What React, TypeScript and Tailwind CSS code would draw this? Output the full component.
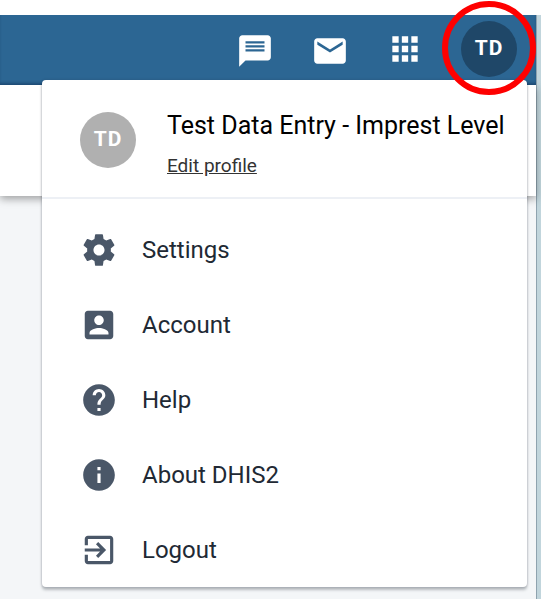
import React from "react";

const items = [
  {
    label: "Settings",
    path: "M19.43 12.98c.04-.32.07-.64.07-.98s-.03-.66-.07-.98l2.11-1.65c.19-.15.24-.42.12-.64l-2-3.46c-.12-.22-.39-.3-.61-.22l-2.49 1c-.52-.4-1.08-.73-1.69-.98l-.38-2.65C14.46 2.18 14.25 2 14 2h-4c-.25 0-.46.18-.49.42l-.38 2.65c-.61.25-1.17.59-1.69.98l-2.49-1c-.23-.09-.49 0-.61.22l-2 3.46c-.13.22-.07.49.12.64l2.11 1.65c-.04.32-.07.65-.07.98s.03.66.07.98l-2.11 1.65c-.19.15-.24.42-.12.64l2 3.46c.12.22.39.3.61.22l2.49-1c.52.4 1.08.73 1.69.98l.38 2.65c.03.24.24.42.49.42h4c.25 0 .46-.18.49-.42l.38-2.65c.61-.25 1.17-.59 1.69-.98l2.49 1c.23.09.49 0 .61-.22l2-3.46c.12-.22.07-.49-.12-.64l-2.11-1.65zM12 15.5c-1.93 0-3.5-1.57-3.5-3.5s1.57-3.5 3.5-3.5 3.5 1.57 3.5 3.5-1.57 3.5-3.5 3.5z",
  },
  {
    label: "Account",
    path: "M3 5v14c0 1.1.89 2 2 2h14c1.1 0 2-.9 2-2V5c0-1.1-.9-2-2-2H5c-1.11 0-2 .9-2 2zm12 4c0 1.66-1.34 3-3 3s-3-1.34-3-3 1.34-3 3-3 3 1.34 3 3zm-9 8c0-2 4-3.1 6-3.1s6 1.1 6 3.1v1H6v-1z",
  },
  {
    label: "Help",
    path: "M12 2C6.48 2 2 6.48 2 12s4.48 10 10 10 10-4.48 10-10S17.52 2 12 2zm1 17h-2v-2h2v2zm2.07-7.75l-.9.92C13.45 12.9 13 13.5 13 15h-2v-.5c0-1.1.45-2.1 1.17-2.83l1.24-1.26c.37-.36.59-.86.59-1.41 0-1.1-.9-2-2-2s-2 .9-2 2H8c0-2.21 1.79-4 4-4s4 1.79 4 4c0 .88-.36 1.68-.93 2.25z",
  },
  {
    label: "About DHIS2",
    path: "M12 2C6.48 2 2 6.48 2 12s4.48 10 10 10 10-4.48 10-10S17.52 2 12 2zm1 15h-2v-6h2v6zm0-8h-2V7h2v2z",
  },
  {
    label: "Logout",
    path: "M10.09 15.59L11.5 17l5-5-5-5-1.41 1.41L12.67 11H3v2h9.67l-2.58 2.59zM19 3H5c-1.11 0-2 .9-2 2v4h2V5h14v14H5v-4H3v4c0 1.1.89 2 2 2h14c1.1 0 2-.9 2-2V5c0-1.1-.9-2-2-2z",
  },
];

function Icon({ path }: { path: string }) {
  return (
    <svg viewBox="0 0 24 24" className="block size-[38px] shrink-0 fill-current" aria-hidden="true">
      <path d={path} />
    </svg>
  );
}

function ProfileMenu() {
  return (
    <div className="absolute top-[65px] right-[9px] left-[42px] rounded-[4px] bg-white shadow-[0_0_2px_1px_rgba(33,43,54,0.12),0_3px_3px_rgba(33,43,54,0.28)]">
      <div className="flex items-start gap-[31px] border-b-2 border-[#edf0f5] pt-6 pr-4 pb-[13px] pl-[38px]">
        <div className="flex pt-2">
          <span className="flex size-14 shrink-0 items-center justify-center rounded-full bg-[#b0b0b0] text-[21px] font-bold tracking-[1px] text-white">
            TD
          </span>
        </div>
        <div className="flex flex-col items-start whitespace-nowrap">
          <h1 className="text-[25px] leading-[44px] text-black">Test Data Entry - Imprest Level</h1>
          <a href="#profile" className="text-[19px] leading-[36px] text-[#333] underline">
            Edit profile
          </a>
        </div>
      </div>
      <ul className="pt-[13px]">
        {items.map((item) => (
          <li key={item.label}>
            <a href="#menu" className="flex h-[75px] items-center gap-6 pl-[38px] text-[#4a5768]">
              <Icon path={item.path} />
              <span className="text-2xl text-[#212934]">{item.label}</span>
            </a>
          </li>
        ))}
      </ul>
    </div>
  );
}

export default function App() {
  return (
    <div className="flex min-h-screen flex-col bg-white pt-[15px] font-[Roboto,'Liberation_Sans',sans-serif]">
      <div className="flex flex-1 flex-col border-r-4 border-[#c1d5dc]">
        <div className="flex flex-1 flex-col border-r border-[#8fa3af] bg-[#f4f6f8]">
          <header className="relative h-[70px] bg-[#2c6693] shadow-[inset_0_-3px_3px_-1px_rgba(12,40,75,0.45)]">
            <ProfileMenu />
            <nav className="flex h-full items-center justify-end gap-[37px] pr-[19px] pb-0.5 text-white">
              <div className="flex gap-[37px] pt-1">
                <button aria-label="Interpretations">
                  <Icon path="M20 2H4c-1.1 0-1.99.9-1.99 2L2 22l4-4h14c1.1 0 2-.9 2-2V4c0-1.1-.9-2-2-2zM6 5.9h12v1.4H6zM6 8.4h12v1.4H6zM6 10.9h12v1.4H6z" />
                </button>
                <button aria-label="Messages">
                  <Icon path="M20 4H4c-1.1 0-1.99.9-1.99 2L2 18c0 1.1.9 2 2 2h16c1.1 0 2-.9 2-2V6c0-1.1-.9-2-2-2zm0 4l-8 5-8-5V6l8 5 8-5v2z" />
                </button>
              </div>
              <button aria-label="Apps">
                <Icon path="M4 8h4V4H4v4zm6 12h4v-4h-4v4zm-6 0h4v-4H4v4zm0-6h4v-4H4v4zm6 0h4v-4h-4v4zm6-10v4h4V4h-4zm-6 4h4V4h-4v4zm6 6h4v-4h-4v4zm0 6h4v-4h-4v4z" />
              </button>
              <div className="relative">
                <button className="flex size-14 items-center justify-center rounded-full bg-[#1f4768] text-[21px] font-bold tracking-[1px]">
                  TD
                </button>
                <span className="pointer-events-none absolute -inset-x-[19px] -top-5 -bottom-[18px] rounded-full border-6 border-[#fe0000]" />
              </div>
            </nav>
          </header>
          <div className="h-[111px] bg-white shadow-[0_3px_8px_rgba(0,0,0,0.35)]" />
        </div>
      </div>
    </div>
  );
}
